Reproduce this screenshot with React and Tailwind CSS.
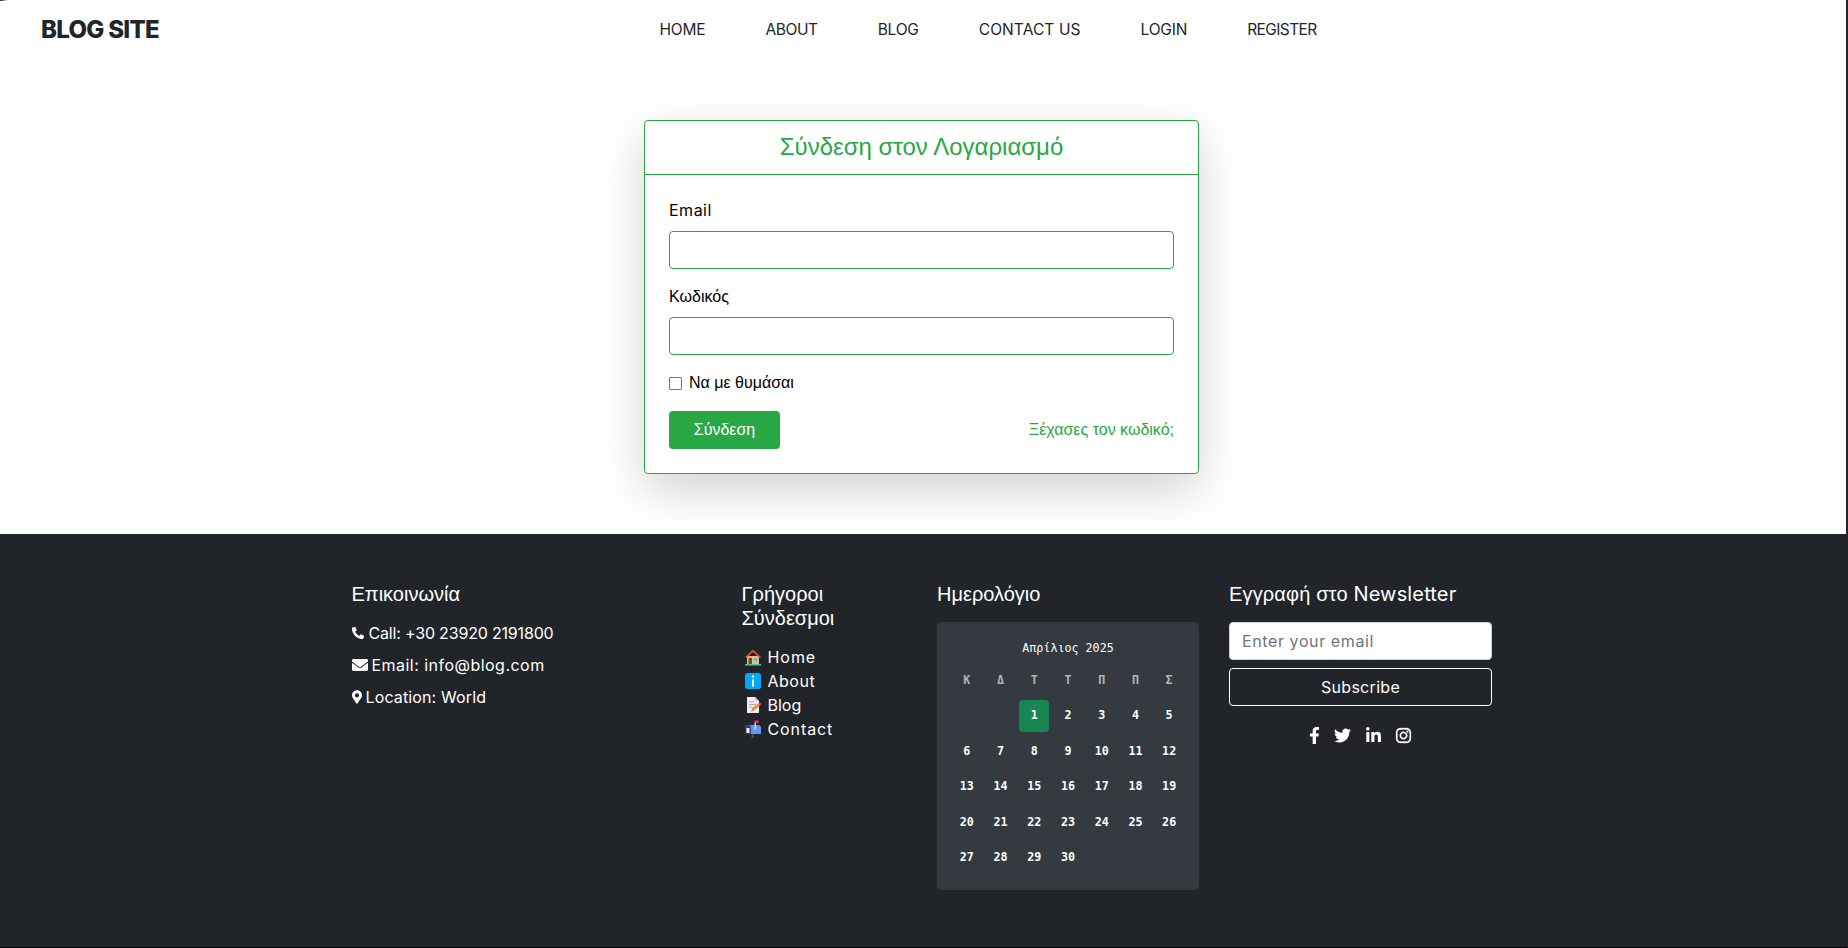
import React from 'react';
import { FaPhoneAlt, FaEnvelope, FaMapMarkerAlt, FaFacebookF, FaTwitter, FaLinkedinIn, FaInstagram } from 'react-icons/fa';

const GREEK = "font-['Liberation_Sans',Arial,sans-serif]";

function HomeIcon() {
  return (
    <svg width="18" height="18" viewBox="0 0 18 18" className="shrink-0 ml-[2px]">
      <rect x="3" y="8" width="12" height="8" fill="#f2b77c" />
      <path d="M1 9 L9 1.5 L17 9 L15.5 10 L9 4 L2.5 10 Z" fill="#e5483b" />
      <rect x="4.5" y="10" width="3.5" height="6" fill="#7a4a2c" />
      <rect x="10" y="10" width="3.5" height="3" fill="#6fb3e0" />
      <rect x="1" y="16" width="16" height="1.5" fill="#3ecf8e" />
    </svg>
  );
}

function InfoIcon() {
  return (
    <svg width="18" height="18" viewBox="0 0 18 18" className="shrink-0 ml-[2px]">
      <rect x="1" y="1" width="16" height="16" rx="2.5" fill="#03a9f4" />
      <rect x="8" y="7.5" width="2" height="7" fill="#fff" />
      <rect x="8" y="3.5" width="2" height="2" fill="#fff" />
    </svg>
  );
}

function MemoIcon() {
  return (
    <svg width="18" height="18" viewBox="0 0 18 18" className="shrink-0 ml-[2px]">
      <path d="M3 1 H11 L15 5 V17 H3 Z" fill="#f1edf5" />
      <path d="M11 1 L15 5 H11 Z" fill="#c9c2d4" />
      <path d="M5 6 H10 M5 8.5 H12 M5 11 H9" stroke="#b3a9c2" strokeWidth="1" />
      <path d="M7 15.5 L8 12.5 L14.5 7 L16.5 9 L10 14.5 Z" fill="#f58a2e" />
      <path d="M14.5 7 L15.5 6 L17.5 8 L16.5 9 Z" fill="#e8336d" />
    </svg>
  );
}

function MailboxIcon() {
  return (
    <svg width="18" height="18" viewBox="0 0 18 18" className="shrink-0 ml-[2px]">
      <rect x="7.5" y="13" width="2.5" height="5" fill="#6d3f2a" />
      <path d="M4 5 H14 A3 3 0 0 1 17 8 V14 H1 V8 A3 3 0 0 1 4 5 Z" fill="#5b9bf0" />
      <path d="M1 14 V8 A3 3 0 0 1 7 8 V14 Z" fill="#2c3a8c" />
      <rect x="2.5" y="8" width="3" height="5" fill="#f1edf5" />
      <rect x="10.5" y="1.5" width="1.5" height="8" fill="#c9d4e8" />
      <rect x="10.5" y="0.5" width="4" height="2.5" fill="#e8336d" />
    </svg>
  );
}

const navItems = [
  { label: 'Home', track: 'tracking-[-0.2px]' },
  { label: 'About', track: 'tracking-[-0.4px]' },
  { label: 'Blog', track: 'tracking-[-0.2px]' },
  { label: 'Contact Us', track: 'tracking-[0.1px]' },
  { label: 'Login', track: 'tracking-[-0.2px]' },
  { label: 'Register', track: 'tracking-[-0.6px]' },
];

const links = [
  { label: 'Home', Icon: HomeIcon, track: 'tracking-[0.95px]' },
  { label: 'About', Icon: InfoIcon, track: 'tracking-[0.5px]' },
  { label: 'Blog', Icon: MemoIcon, track: 'tracking-normal' },
  { label: 'Contact', Icon: MailboxIcon, track: 'tracking-[0.9px]' },
];

const weekDays = ['Κ', 'Δ', 'Τ', 'Τ', 'Π', 'Π', 'Σ'];
const days = [null, null, 1, 2, 3, 4, 5];
for (let d = 6; d <= 30; d++) days.push(d);

function Calendar() {
  return (
    <div className="bg-[#343a40] rounded-[5px] h-[268px] px-[13px] pt-[14px] font-['DejaVu_Sans_Mono',monospace] text-[11.7px] font-bold text-white">
      <div className="text-center leading-6 font-normal mb-[9px]">Απρίλιος 2025</div>
      <div className="grid grid-cols-7 h-6 items-center mb-[7px]">
        {weekDays.map((w, i) => (
          <div key={i} className="text-center text-[#adb5bd]">{w}</div>
        ))}
      </div>
      <div className="grid grid-cols-7 gap-y-[3.5px]">
        {days.map((d, i) => (
          <div
            key={i}
            className={d === 1
              ? 'h-8 mx-[2px] flex items-center justify-center rounded-[4px] bg-[#198754]'
              : 'h-8 flex items-center justify-center'}
          >
            {d}
          </div>
        ))}
      </div>
    </div>
  );
}

export default function App() {
  return (
    <div className="relative h-screen w-full overflow-hidden flex flex-col bg-white border-r-2 border-b border-r-[#212529] border-b-black font-['Inter',sans-serif] text-[#212529] text-base">
      <div className="absolute top-0 left-0 w-2 h-px bg-linear-to-r from-[#212529] to-transparent" />
      <nav className="h-[58px] shrink-0 flex items-center pl-[41px] pt-[2px]">
        <span className="w-[618.5px] text-2xl font-extrabold tracking-[-0.7px]">BLOG SITE</span>
        <ul className="flex gap-[60px] text-[15.5px] uppercase">
          {navItems.map((item) => (
            <li key={item.label} className={item.track}>{item.label}</li>
          ))}
        </ul>
      </nav>

      <main className="flex justify-center pr-[3px] pt-[62px] pb-[60px]">
        <div className="w-[555px] border border-[#28a745] rounded-[4px] bg-white text-black shadow-[0_16px_48px_rgba(0,0,0,0.175)]">
          <div className={`border-b border-[#28a745] h-[54px] pb-[1px] flex items-center justify-center text-2xl text-[#28a745] ${GREEK}`}>
            Σύνδεση στον Λογαριασμό
          </div>
          <form className="px-6 pt-[23px] pb-6">
            <label className="block leading-6 mb-[9px] tracking-[0.5px]">Email</label>
            <input className="block w-full h-[38px] border border-[#28a745] rounded-[4px] mb-4" />
            <label className={`block leading-6 mb-2 ${GREEK}`}>Κωδικός</label>
            <input className="block w-full h-[38px] border border-[#28a745] rounded-[4px] mb-4" />
            <div className={`flex items-center h-6 mb-4 ${GREEK}`}>
              <span className="w-[13px] h-[13px] border border-[#767676] rounded-[1px] mr-[7px]" />
              Να με θυμάσαι
            </div>
            <div className={`flex items-center justify-between ${GREEK}`}>
              <button type="button" className="w-[111px] h-[38px] rounded-[4px] bg-[#28a745] text-white">Σύνδεση</button>
              <a className="text-[#28a745]">Ξέχασες τον κωδικό;</a>
            </div>
          </form>
        </div>
      </main>

      <footer className="flex-1 bg-[#212529] text-white pr-[2px] pt-12 flex justify-center">
        <div className="w-[1170px] grid grid-cols-[390px_195px_292px_293px]">
          <div className="pl-[14.5px] pr-[15px]">
            <h5 className={`text-xl leading-6 mb-[15px] ${GREEK}`}>Επικοινωνία</h5>
            <p className="flex items-center h-6 mb-2 tracking-[-0.18px]"><FaPhoneAlt className="w-3 h-3 mr-[5px]" />Call: +30 23920 2191800</p>
            <p className="flex items-center h-6 mb-2 tracking-[0.47px]"><FaEnvelope className="w-4 h-4 mr-1" />Email: info@blog.com</p>
            <p className="flex items-center h-6 tracking-[0.13px]"><FaMapMarkerAlt className="w-[10px] h-[14px] mr-1" />Location: World</p>
          </div>
          <div className="pl-[14.5px] pr-[15px]">
            <h5 className={`text-xl leading-6 mb-[15px] ${GREEK}`}>Γρήγοροι Σύνδεσμοι</h5>
            <ul>
              {links.map(({ label, Icon, track }) => (
                <li key={label} className={`flex items-center h-6 gap-[6px] ${track}`}>
                  <Icon />
                  {label}
                </li>
              ))}
            </ul>
          </div>
          <div className="px-[15px]">
            <h5 className={`text-xl leading-6 mb-4 ${GREEK}`}>Ημερολόγιο</h5>
            <Calendar />
          </div>
          <div className="px-[15px]">
            <h5 className="text-xl leading-6 mb-4 tracking-[0.15px]"><span className={GREEK}>Εγγραφή στο</span> Newsletter</h5>
            <input placeholder="Enter your email" className="block w-full h-[38px] px-3 rounded-[4px] border border-[#ced4da] bg-white text-[#495057] placeholder:text-[#6c757d] mb-2 tracking-[0.6px]" />
            <button type="button" className="block w-full h-[38px] rounded-[4px] border border-white text-white tracking-[0.3px]">Subscribe</button>
            <div className="flex justify-center items-center mt-[17px] h-6 text-[17px] pr-[3px]">
              <FaFacebookF />
              <FaTwitter className="ml-[11px]" />
              <FaLinkedinIn className="ml-[14px]" />
              <FaInstagram className="ml-[13px] [stroke-width:12]" />
            </div>
          </div>
        </div>
      </footer>
    </div>
  );
}
